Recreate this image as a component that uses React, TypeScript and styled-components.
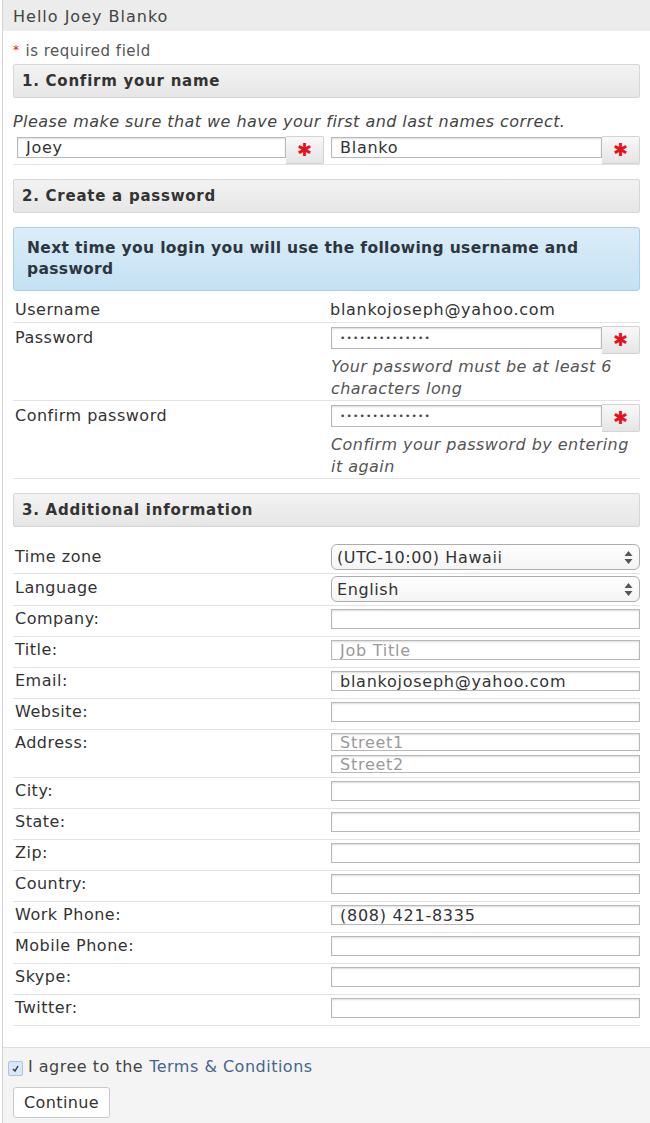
import React from "react";
import styled, { createGlobalStyle } from "styled-components";

const Global = createGlobalStyle`
  html, body { margin: 0; padding: 0; background: #fff; }
  body { font-family: "DejaVu Sans", "Liberation Sans", sans-serif; color: #333; }
  * { box-sizing: border-box; }
`;

const Panel = styled.div`
  margin-left: 2px;
  width: 648px;
  min-height: 1123px;
  border-left: 1px solid #d2d2d2;
  display: flex;
  flex-direction: column;
`;

const Header = styled.div`
  height: 31px;
  background: #ececec;
  padding: 7px 0 0 10px;
  font-size: 16px;
  letter-spacing: 1px;
  line-height: 20px;
  color: #444;
`;

const Content = styled.div`
  padding: 0 10px 0 10px;
`;

const Required = styled.div`
  margin-top: 9px;
  font-size: 15px;
  letter-spacing: 0.5px;
  line-height: 20px;
  color: #555;
  & > span { color: #e0101a; font-size: 12px; vertical-align: 2px; margin-right: 6px; }
`;

const SectionHead = styled.div<{ $mt: number }>`
  margin-top: ${(p) => p.$mt}px;
  height: 34px;
  background: linear-gradient(#f3f3f3, #e6e6e6);
  border: 1px solid #d6d6d6;
  border-radius: 2px;
  padding-left: 8px;
  font-size: 15px;
  font-weight: bold;
  letter-spacing: 0.75px;
  line-height: 32px;
  color: #333;
`;

const Intro = styled.div`
  margin-top: 14px;
  font-size: 16px;
  font-style: italic;
  letter-spacing: 0.45px;
  line-height: 20px;
  color: #444;
`;

const NameRow = styled.div`
  margin-top: 4px;
  padding-bottom: 1px;
  border-bottom: 1px solid #e3e3e3;
  display: grid;
  grid-template-columns: 318px 1fr;
`;

const NameHalf = styled.div<{ $first?: boolean }>`
  display: flex;
  padding: ${(p) => (p.$first ? "0 7px 0 4px" : "0")};
`;

const FieldWithStar = styled.div`
  display: flex;
  align-items: flex-start;
  height: 27px;
  flex: 1;
  & > input { flex: 1; }
`;

const TextInput = styled.input<{ $h?: number; $mt?: number }>`
  min-width: 0;
  width: 100%;
  display: block;
  height: ${(p) => p.$h ?? 20}px;
  margin-top: ${(p) => p.$mt ?? 0}px;
  border: 1px solid #b9b9b9;
  box-shadow: inset 0 1px 2px rgba(0, 0, 0, 0.14);
  background: #fff;
  padding: 0 8px;
  font-family: "DejaVu Sans", sans-serif;
  font-size: 16px;
  letter-spacing: 0.75px;
  color: #333;
  outline: none;
  &::placeholder { color: #9a9a9a; }
`;

const PasswordInput = styled(TextInput)`
  font-size: 9px;
  letter-spacing: 1.2px;
  color: #444;
`;

const StarButton = styled.div`
  flex: none;
  width: 38px;
  height: 28px;
  background: linear-gradient(#f8f8f8, #e5e5e5);
  border: 1px solid #d3d3d3;
  border-left: none;
  border-radius: 0 2px 2px 0;
  display: flex;
  align-items: center;
  justify-content: center;
  color: #e8101a;
  font-size: 18px;
  line-height: 1;
`;

const Info = styled.div`
  margin-top: 14px;
  background: linear-gradient(#dcedf8, #c4e1f3);
  border: 1px solid #a7d2ec;
  border-radius: 3px;
  padding: 10px 12px 10px 13px;
  font-size: 15.5px;
  font-weight: bold;
  letter-spacing: 0.35px;
  line-height: 21px;
  color: #2c3640;
`;

const Rows = styled.div<{ $mt: number }>`
  margin-top: ${(p) => p.$mt}px;
`;

const Row = styled.div<{ $pt: number; $pb: number }>`
  display: grid;
  grid-template-columns: 318px 1fr;
  align-items: start;
  padding: ${(p) => p.$pt}px 0 ${(p) => p.$pb}px;
  border-bottom: 1px solid #e3e3e3;
`;

const Label = styled.div<{ $mt?: number }>`
  padding-left: 2px;
  margin-top: ${(p) => p.$mt ?? 0}px;
  font-size: 16px;
  letter-spacing: 0.5px;
  line-height: 20px;
  color: #333;
`;

const Value = styled.div`
  margin-left: -1px;
  font-size: 16px;
  letter-spacing: 0.72px;
  line-height: 20px;
  color: #333;
`;

const FieldCol = styled.div`
  display: flex;
  flex-direction: column;
  gap: 4px;
  & > input { flex: none; }
`;

const Help = styled.div`
  margin-top: 3px;
  font-size: 16px;
  font-style: italic;
  letter-spacing: 0.45px;
  line-height: 22px;
  color: #555;
`;

const SelectBox = styled.div<{ $h: number }>`
  height: ${(p) => p.$h}px;
  border: 1px solid #adadad;
  border-radius: 6px;
  background: linear-gradient(#fff, #f4f4f4);
  padding: 0 6px 0 5px;
  display: flex;
  align-items: center;
  justify-content: space-between;
  font-size: 16px;
  letter-spacing: 0.6px;
  color: #333;
`;

const Footer = styled.div`
  margin-top: 21px;
  flex: 1;
  background: #f4f4f4;
  border-top: 1px solid #dedede;
  padding: 8px 0 6px 5px;
`;

const AgreeLine = styled.div`
  display: flex;
  align-items: center;
  height: 20px;
  font-size: 16px;
  letter-spacing: 0.5px;
  color: #444;
`;

const Check = styled.span`
  width: 15px;
  height: 15px;
  margin: 4px 5px 0 0;
  border: 1px solid #a9c3e3;
  background: #dbe7f6;
  border-radius: 2px;
  display: flex;
  align-items: center;
  justify-content: center;
`;

const TermsLink = styled.a`
  color: #46658f;
  text-decoration: none;
  margin-left: 6px;
`;

const ContinueButton = styled.button`
  margin: 11px 0 0 5px;
  width: 97px;
  height: 31px;
  background: #fff;
  border: 1px solid #cacaca;
  border-radius: 3px;
  font-family: "DejaVu Sans", sans-serif;
  font-size: 16px;
  letter-spacing: 0.4px;
  color: #333;
  padding: 0;
`;

const Arrows = () => (
  <svg width="9" height="15" viewBox="0 0 9 15">
    <path d="M4.5 1 L8.5 6 L0.5 6 Z" fill="#555" />
    <path d="M4.5 14 L8.5 9 L0.5 9 Z" fill="#555" />
  </svg>
);

const Star = () => <StarButton>✱</StarButton>;

type SimpleField = { label: string; value?: string; placeholder?: string };

const simpleFields: SimpleField[] = [
  { label: "Company:" },
  { label: "Title:", placeholder: "Job Title" },
  { label: "Email:", value: "blankojoseph@yahoo.com" },
  { label: "Website:" },
];

const lowerFields: SimpleField[] = [
  { label: "City:" },
  { label: "State:" },
  { label: "Zip:" },
  { label: "Country:" },
  { label: "Work Phone:", value: "(808) 421-8335" },
  { label: "Mobile Phone:" },
  { label: "Skype:" },
  { label: "Twitter:" },
];

const InputRow = ({ f }: { f: SimpleField }) => (
  <Row $pt={3} $pb={7}>
    <Label>{f.label}</Label>
    <TextInput defaultValue={f.value} placeholder={f.placeholder} $h={20} />
  </Row>
);

export default function App() {
  return (
    <>
      <Global />
      <Panel>
        <Header>Hello Joey Blanko</Header>
        <Content>
          <Required>
            <span>*</span>is required field
          </Required>
          <SectionHead $mt={3}>1. Confirm your name</SectionHead>
          <Intro>Please make sure that we have your first and last names correct.</Intro>
          <NameRow>
            <NameHalf $first>
              <FieldWithStar>
                <TextInput defaultValue="Joey" $h={21} $mt={1} />
                <Star />
              </FieldWithStar>
            </NameHalf>
            <NameHalf>
              <FieldWithStar>
                <TextInput defaultValue="Blanko" $h={21} $mt={1} />
                <Star />
              </FieldWithStar>
            </NameHalf>
          </NameRow>

          <SectionHead $mt={14}>2. Create a password</SectionHead>
          <Info>Next time you login you will use the following username and password</Info>
          <Row $pt={9} $pb={2}>
            <Label>Username</Label>
            <Value>blankojoseph@yahoo.com</Value>
          </Row>
          <Row $pt={3} $pb={0}>
            <Label $mt={2}>Password</Label>
            <div>
              <FieldWithStar>
                <PasswordInput type="password" defaultValue="abcdefghijklmn" $h={22} $mt={1} />
                <Star />
              </FieldWithStar>
              <Help>Your password must be at least 6 characters long</Help>
            </div>
          </Row>
          <Row $pt={3} $pb={0}>
            <Label $mt={2}>Confirm password</Label>
            <div>
              <FieldWithStar>
                <PasswordInput type="password" defaultValue="abcdefghijklmn" $h={22} $mt={1} />
                <Star />
              </FieldWithStar>
              <Help>Confirm your password by entering it again</Help>
            </div>
          </Row>

          <SectionHead $mt={14}>3. Additional information</SectionHead>
          <Rows $mt={14}>
            <Row $pt={3} $pb={3}>
              <Label $mt={3}>Time zone</Label>
              <SelectBox $h={26}>
                <span>(UTC-10:00) Hawaii</span>
                <Arrows />
              </SelectBox>
            </Row>
            <Row $pt={2} $pb={3}>
              <Label $mt={2}>Language</Label>
              <SelectBox $h={26}>
                <span>English</span>
                <Arrows />
              </SelectBox>
            </Row>
            {simpleFields.map((f) => (
              <InputRow key={f.label} f={f} />
            ))}
            <Row $pt={3} $pb={4}>
              <Label>Address:</Label>
              <FieldCol>
                <TextInput placeholder="Street1" $h={18} />
                <TextInput placeholder="Street2" $h={18} />
              </FieldCol>
            </Row>
            {lowerFields.map((f) => (
              <InputRow key={f.label} f={f} />
            ))}
          </Rows>
        </Content>
        <Footer>
          <AgreeLine>
            <Check>
              <svg width="7" height="7" viewBox="0 0 7 7">
                <path d="M1 4 L3 6 L6 1" stroke="#333" strokeWidth="1.4" fill="none" />
              </svg>
            </Check>
            I agree to the
            <TermsLink href="#">Terms &amp; Conditions</TermsLink>
          </AgreeLine>
          <ContinueButton>Continue</ContinueButton>
        </Footer>
      </Panel>
    </>
  );
}
